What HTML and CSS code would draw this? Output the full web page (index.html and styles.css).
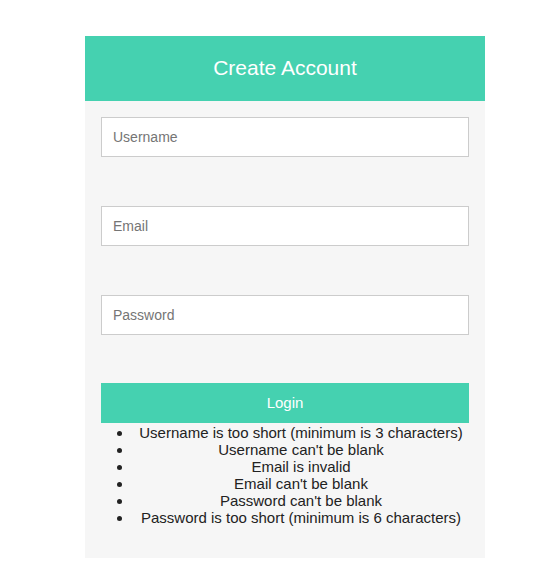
FILE: index.html
```html
<!DOCTYPE html>
<html>
<head>
<meta charset="utf-8">
<link rel="stylesheet" href="styles.css">
</head>
<body>
<div class="card">
  <div class="card-header">Create Account</div>
  <div class="card-body">
    <form class="form">
      <input class="field" type="text" placeholder="Username">
      <input class="field" type="email" placeholder="Email">
      <input class="field" type="password" placeholder="Password">
      <button class="btn" type="button">Login</button>
    </form>
    <ul class="errors">
      <li>Username is too short (minimum is 3 characters)</li>
      <li>Username can't be blank</li>
      <li>Email is invalid</li>
      <li>Email can't be blank</li>
      <li>Password can't be blank</li>
      <li>Password is too short (minimum is 6 characters)</li>
    </ul>
  </div>
</div>
</body>
</html>
```
FILE: styles.css
```css
html, body {
  margin: 0;
  padding: 0;
  background: #ffffff;
  font-family: "Liberation Sans", Arial, sans-serif;
}
.card {
  width: 400px;
  margin: 36px 0 0 85px;
  background: #f6f6f6;
}
.card-header {
  box-sizing: border-box;
  height: 65px;
  padding-bottom: 2px;
  background: #45d1b0;
  color: #ffffff;
  font-size: 21px;
  display: flex;
  align-items: center;
  justify-content: center;
}
.card-body {
  padding: 16px 0 32px 0;
}
.form {
  display: flex;
  flex-direction: column;
  padding: 0 16px;
  gap: 49px;
}
.field {
  box-sizing: border-box;
  height: 40px;
  width: 100%;
  border: 1px solid #cccccc;
  background: #ffffff;
  padding: 0 11px;
  font-family: "Liberation Sans", Arial, sans-serif;
  font-size: 14px;
  color: #333;
  outline: none;
}
.field::placeholder {
  color: #757575;
}
.btn {
  margin-top: -1px;
  height: 40px;
  border: none;
  background: #45d1b0;
  color: #ffffff;
  font-family: "Liberation Sans", Arial, sans-serif;
  font-size: 15px;
  padding: 0 0 2px 0;
}
.errors {
  margin: 1px 16px 0 0;
  padding-left: 48px;
  text-align: center;
  font-size: 15px;
  line-height: 17px;
  color: #222;
}
```
